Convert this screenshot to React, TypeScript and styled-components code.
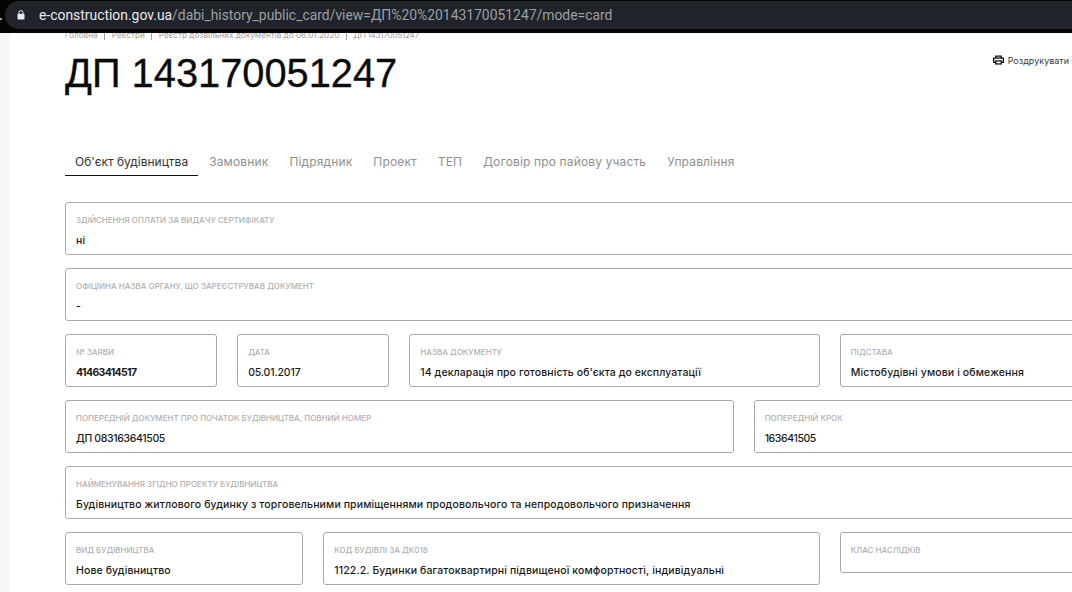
import React from "react";
import styled, { createGlobalStyle } from "styled-components";

const GlobalStyle = createGlobalStyle`
  html, body {
    margin: 0;
    padding: 0;
    width: 1072px;
    height: 592px;
    overflow: hidden;
    background: #fff;
    font-family: Inter, "Liberation Sans", sans-serif;
  }
  * { box-sizing: border-box; }
`;

const tabs = ["Об'єкт будівництва", "Замовник", "Підрядник", "Проект", "ТЕП", "Договір про пайову участь", "Управління"];

type Field = { label: string; value?: string; span: number; bold?: boolean; tracking?: number };

const fields: Field[] = [
  { label: "Здійснення оплати за видачу сертифікату", value: "ні", span: 12 },
  { label: "Офіційна назва органу, що зареєстрував документ", value: "-", span: 12 },
  { label: "№ заяви", value: "41463414517", span: 2, bold: true, tracking: -0.65 },
  { label: "Дата", value: "05.01.2017", span: 2, tracking: -0.15 },
  { label: "Назва документу", value: "14 декларація про готовність об'єкта до експлуатації", span: 5, tracking: 0.08 },
  { label: "Підстава", value: "Містобудівні умови і обмеження", span: 3 },
  { label: "Попередній документ про початок будівництва, повний номер", value: "ДП 083163641505", span: 8, tracking: -0.35 },
  { label: "Попередній крок", value: "163641505", span: 4, tracking: -0.4 },
  { label: "Найменування згідно проекту будівництва", value: "Будівництво житлового будинку з торговельними приміщеннями продовольчого та непродовольчого призначення", span: 12 },
  { label: "Вид будівництва", value: "Нове будівництво", span: 3 },
  { label: "Код будівлі за ДК018", value: "1122.2. Будинки багатоквартирні підвищеної комфортності, індивідуальні", span: 6 },
  { label: "Клас наслідків", span: 3 },
];

const crumbs = ["Головна", "Реєстри", "Реєстр дозвільних документів до 08.01.2020", "ДП 143170051247"];

const App: React.FC = () => (
  <>
    <GlobalStyle />
    <Page>
      <BrowserBar>
        <Dot />
        <Omnibox>
          <LockIcon viewBox="0 0 8 10">
            <path d="M2 4V2.6a2 2 0 0 1 4 0V4" fill="none" stroke="#e8eaed" strokeWidth="1" />
            <rect x="0.5" y="3.8" width="7" height="5.7" rx="0.8" fill="#e8eaed" />
          </LockIcon>
          <Url>
            <UrlHost>e-construction.gov.ua</UrlHost>/dabi_history_public_card/view=ДП%20%20143170051247/mode=card
          </Url>
        </Omnibox>
      </BrowserBar>
      <Content>
        <Breadcrumbs>
          {crumbs.map((crumb) => (
            <Crumb key={crumb}>{crumb}</Crumb>
          ))}
        </Breadcrumbs>
        <Header>
          <Title>ДП 143170051247</Title>
          <PrintLink>
            <PrintIcon viewBox="0 0 12 10">
              <path d="M3 3V.7h6V3M3 7.5H.7V3h10.6v4.5H9" fill="none" stroke="#111" strokeWidth="1.4" />
              <rect x="3" y="6" width="6" height="3.3" fill="none" stroke="#111" strokeWidth="1.4" />
            </PrintIcon>
            Роздрукувати
          </PrintLink>
        </Header>
        <Tabs>
          {tabs.map((tab, i) => (
            <Tab key={tab} $active={i === 0}>
              {tab}
            </Tab>
          ))}
        </Tabs>
        <FieldGrid>
          {fields.map((field) => (
            <Card key={field.label} $span={field.span} $empty={!field.value}>
              <Label>{field.label}</Label>
              {field.value && (
                <Value $bold={field.bold} $tracking={field.tracking}>
                  {field.value}
                </Value>
              )}
            </Card>
          ))}
        </FieldGrid>
      </Content>
    </Page>
  </>
);

const Page = styled.div`
  width: 1072px;
  height: 592px;
  overflow: hidden;
  display: flex;
  flex-direction: column;
`;

const BrowserBar = styled.div`
  flex: none;
  height: 33px;
  background: #050506;
  padding: 1px 0 4px 5px;
  display: flex;
  position: relative;
`;

const Dot = styled.span`
  position: absolute;
  left: 0;
  top: 18px;
  width: 2px;
  height: 2px;
  background: #9aa0a6;
`;

const Omnibox = styled.div`
  flex: 1;
  background: #202329;
  border-radius: 14px 0 0 14px;
  padding-left: 12px;
  display: flex;
  align-items: center;
  gap: 14px;
`;

const LockIcon = styled.svg`
  width: 8px;
  height: 10px;
`;

const Url = styled.div`
  font-family: Roboto, sans-serif;
  font-size: 13.9px;
  color: #9aa0a6;
  white-space: nowrap;
`;

const UrlHost = styled.span`
  color: #e8eaed;
`;

const Content = styled.div`
  flex: 1;
  background: #fff;
  border-left: 10px solid #f6f6f6;
  padding-left: 55px;
`;

const Breadcrumbs = styled.div`
  height: 7px;
  overflow: hidden;
  display: flex;
  align-items: flex-end;
`;

const Crumb = styled.span`
  font-size: 8.2px;
  line-height: 10px;
  color: #a0a0a0;
  white-space: nowrap;
  padding: 0 6.5px;
  border-left: 1px solid #a0a0a0;

  &:first-child {
    padding-left: 0;
    border-left: 0;
  }

  &:last-child {
    letter-spacing: -0.3px;
  }
`;

const Header = styled.div`
  height: 46px;
  margin-top: 10px;
  display: flex;
  justify-content: space-between;
`;

const Title = styled.h1`
  margin: 0;
  font-family: "Liberation Sans", Arial, sans-serif;
  font-weight: 400;
  font-size: 39.8px;
  line-height: 46px;
  color: #0b0b0b;
  -webkit-text-stroke: 0.3px #0b0b0b;
`;

const PrintLink = styled.div`
  display: flex;
  align-items: center;
  gap: 4px;
  height: 20px;
  padding-right: 3px;
  font-size: 9px;
  color: #3a3a3a;
  white-space: nowrap;
`;

const PrintIcon = styled.svg`
  width: 11px;
  height: 10px;
`;

const Tabs = styled.div`
  margin-top: 53px;
  display: flex;
  gap: 1px;
`;

const Tab = styled.div<{ $active?: boolean }>`
  padding: 0 10px;
  height: 27px;
  line-height: 26px;
  font-size: 12px;
  letter-spacing: ${({ $active }) => ($active ? "0" : "0.15px")};
  white-space: nowrap;
  color: ${({ $active }) => ($active ? "#333" : "#8f8f8f")};
  border-bottom: 1px solid ${({ $active }) => ($active ? "#111" : "transparent")};
`;

const FieldGrid = styled.div`
  margin-top: 26px;
  width: 1013px;
  display: grid;
  grid-template-columns: repeat(12, 1fr);
  column-gap: 20px;
  row-gap: 13px;
  align-items: start;
`;

const Card = styled.div<{ $span: number; $empty?: boolean }>`
  grid-column: span ${({ $span }) => $span};
  height: ${({ $empty }) => ($empty ? "41px" : "53px")};
  border: 1px solid #a9a9a9;
  border-radius: 3px;
  padding: 11px 10px 0;
`;

const Label = styled.div`
  font-size: 8px;
  line-height: 12px;
  color: #b0b0b0;
  font-weight: 500;
  text-transform: uppercase;
  white-space: nowrap;
`;

const Value = styled.div<{ $bold?: boolean; $tracking?: number }>`
  margin-top: 8px;
  font-size: 10.5px;
  line-height: 14px;
  letter-spacing: ${({ $tracking = 0.12 }) => $tracking}px;
  color: #1a1a1a;
  font-weight: ${({ $bold }) => ($bold ? 700 : 500)};
  white-space: nowrap;
`;

export default App;
